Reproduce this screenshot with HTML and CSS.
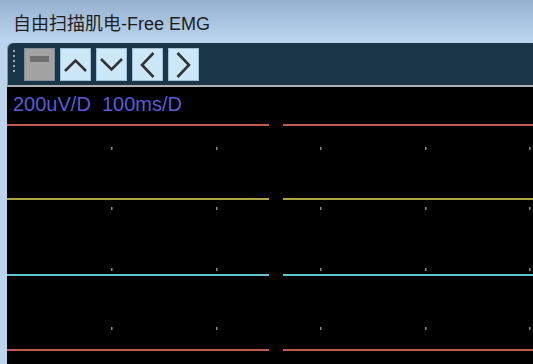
FILE: index.html
```html
<!DOCTYPE html>
<html>
<head>
<meta charset="utf-8">
<link rel="stylesheet" href="styles.css">
</head>
<body>
<div class="title">自由扫描肌电-Free EMG</div>
<div class="main">
  <div class="strip"></div>
  <div class="panel">
    <div class="toolbar">
      <div class="grip"><i></i><i></i><i></i><i></i><i></i></div>
      <div class="btn gray"><span class="bar"></span></div>
      <div class="btn"><svg width="31" height="33" viewBox="0 0 31 33"><polyline points="5,23 15.5,12.5 26,23"/></svg></div>
      <div class="btn"><svg width="31" height="33" viewBox="0 0 31 33"><polyline points="5,11 15.5,21.5 26,11"/></svg></div>
      <div class="btn"><svg width="31" height="33" viewBox="0 0 31 33"><polyline points="21.5,5 10,17 21.5,29"/></svg></div>
      <div class="btn"><svg width="31" height="33" viewBox="0 0 31 33"><polyline points="9.5,5 21,17 9.5,29"/></svg></div>
    </div>
    <div class="scope">
      <div class="label">200uV/D&nbsp;&nbsp;100ms/D</div>
      <svg class="plot" width="526" height="277" viewBox="0 0 526 277">
        <g fill="#c05a55">
          <rect x="0" y="37" width="262" height="2"/>
          <rect x="276" y="37" width="250" height="2"/>
          <rect x="0" y="262" width="262" height="2"/>
          <rect x="276" y="262" width="250" height="2"/>
        </g>
        <g fill="#aca548">
          <rect x="0" y="111" width="262" height="2"/>
          <rect x="276" y="111" width="250" height="2"/>
        </g>
        <g fill="#62c4c4">
          <rect x="0" y="187" width="262" height="2"/>
          <rect x="276" y="187" width="250" height="2"/>
        </g>
        <g fill="#8a8a8a">
          <rect x="104" y="60" width="1.5" height="3"/>
          <rect x="209" y="60" width="1.5" height="3"/>
          <rect x="313" y="60" width="1.5" height="3"/>
          <rect x="418" y="60" width="1.5" height="3"/>
          <rect x="522" y="60" width="1.5" height="3"/>
          <rect x="104" y="120" width="1.5" height="3"/>
          <rect x="209" y="120" width="1.5" height="3"/>
          <rect x="313" y="120" width="1.5" height="3"/>
          <rect x="418" y="120" width="1.5" height="3"/>
          <rect x="522" y="120" width="1.5" height="3"/>
          <rect x="104" y="181" width="1.5" height="3"/>
          <rect x="209" y="181" width="1.5" height="3"/>
          <rect x="313" y="181" width="1.5" height="3"/>
          <rect x="418" y="181" width="1.5" height="3"/>
          <rect x="522" y="181" width="1.5" height="3"/>
          <rect x="104" y="240" width="1.5" height="3"/>
          <rect x="209" y="240" width="1.5" height="3"/>
          <rect x="313" y="240" width="1.5" height="3"/>
          <rect x="418" y="240" width="1.5" height="3"/>
          <rect x="522" y="240" width="1.5" height="3"/>
        </g>
      </svg>
    </div>
  </div>
</div>
</body>
</html>
```
FILE: styles.css
```css
html, body {
  margin: 0;
  padding: 0;
}
body {
  width: 533px;
  height: 364px;
  overflow: hidden;
  background: #bdd5ec;
  font-family: "Liberation Sans", "Noto Sans CJK SC", sans-serif;
}
.title {
  height: 43px;
  box-sizing: border-box;
  padding-left: 13px;
  padding-top: 1px;
  display: flex;
  align-items: center;
  font-size: 18px;
  color: #1e1e1e;
  background: linear-gradient(to bottom, #95b1d1, #bcd6ee);
}
.main {
  display: flex;
  height: 321px;
}
.strip {
  width: 7px;
  flex: none;
}
.panel {
  flex: 1;
  display: flex;
  flex-direction: column;
}
.toolbar {
  height: 44px;
  box-sizing: border-box;
  background: #1c3649;
  border-top-left-radius: 6px;
  border-left: 1px solid #7d95a6;
  border-bottom: 2px solid #b0b0b0;
  display: flex;
  align-items: flex-start;
  padding-top: 5px;
  padding-left: 5px;
  gap: 5px;
}
.grip {
  display: flex;
  flex-direction: column;
  gap: 3px;
  padding-top: 2px;
  width: 6px;
}
.grip i {
  display: block;
  width: 2px;
  height: 2px;
  background: #c9d3dc;
  border-radius: 1px;
}
.btn {
  width: 31px;
  height: 33px;
  box-sizing: border-box;
  background: #cbe7f8;
  border: 1px solid #9fbfd6;
  position: relative;
}
.btn svg {
  position: absolute;
  left: -1px;
  top: -1px;
}
.btn polyline {
  fill: none;
  stroke: #333;
  stroke-width: 2.6;
  stroke-linecap: butt;
  stroke-linejoin: miter;
}
.btn.gray {
  background: #a3a3a3;
  border-color: #7f8d98;
  display: flex;
  justify-content: center;
  padding-top: 7px;
}
.btn.gray .bar {
  display: block;
  width: 19px;
  height: 6px;
  background: #6f6f6f;
}
.scope {
  flex: 1;
  background: #000;
  position: relative;
}
.plot {
  display: block;
}
.label {
  position: absolute;
  left: 6px;
  top: 6px;
  font-size: 20px;
  line-height: 22px;
  color: #5a5ad8;
}
```
